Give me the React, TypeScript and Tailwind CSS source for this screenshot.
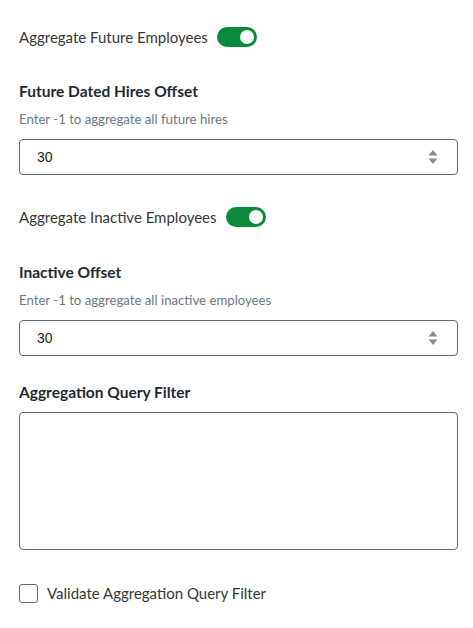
import React from "react";

function Toggle() {
  return (
    <div className="relative w-[40px] h-[20px] rounded-full bg-[#0b8a3c] shrink-0">
      <div className="absolute right-[3px] top-[3px] w-[14px] h-[14px] rounded-full bg-white" />
    </div>
  );
}

function NumberInput({ value }: { value: string }) {
  return (
    <div className="h-[36px] border border-[#5c6b7a] rounded-[4px] flex items-center justify-between pl-[17px] pr-[19px]">
      <span className="text-[14px] text-[#222]" style={{ fontFamily: '"Liberation Sans", Arial, sans-serif' }}>{value}</span>
      <svg width="10" height="20" viewBox="0 0 10 20">
        <path d="M5 3 L9.5 8.5 L0.5 8.5 Z" fill="#8c8c8c" />
        <path d="M0.5 11.5 L9.5 11.5 L5 17 Z" fill="#8c8c8c" />
      </svg>
    </div>
  );
}

export default function App() {
  return (
    <div className="w-[473px] h-[628px] bg-white pl-[19px] pr-[15px] pt-[27px] text-[#2f3133]" style={{ fontFamily: 'Lato, "Noto Sans", sans-serif' }}>
      <div className="flex items-center gap-[9px] h-[20px]">
        <span className="text-[15px] leading-[20px] text-[#34373a]">Aggregate Future Employees</span>
        <Toggle />
      </div>
      <div className="mt-[34px] text-[15.5px] leading-[20px] font-bold text-[#1e2934]">Future Dated Hires Offset</div>
      <div className="mt-[9px] text-[13.2px] leading-[18px] text-[#6b7886]">Enter -1 to aggregate all future hires</div>
      <div className="mt-[11px]">
        <NumberInput value="30" />
      </div>
      <div className="flex items-center gap-[9px] h-[20px] mt-[32px]">
        <span className="text-[15px] leading-[20px] text-[#34373a]">Aggregate Inactive Employees</span>
        <Toggle />
      </div>
      <div className="mt-[35px] text-[15.5px] leading-[20px] font-bold text-[#1e2934]">Inactive Offset</div>
      <div className="mt-[9px] text-[13.2px] leading-[18px] text-[#6b7886]">Enter -1 to aggregate all inactive employees</div>
      <div className="mt-[11px]">
        <NumberInput value="30" />
      </div>
      <div className="mt-[26px] text-[15.5px] leading-[20px] font-bold text-[#1e2934]">Aggregation Query Filter</div>
      <div className="mt-[10px] h-[138px] border border-[#5c6b7a] rounded-[4px]" />
      <div className="mt-[33px] flex items-center gap-[9px]">
        <div className="w-[19px] h-[19px] border border-[#5c6b7a] rounded-[3px] bg-white" />
        <span className="text-[15px] leading-[20px] text-[#34373a]">Validate Aggregation Query Filter</span>
      </div>
    </div>
  );
}
